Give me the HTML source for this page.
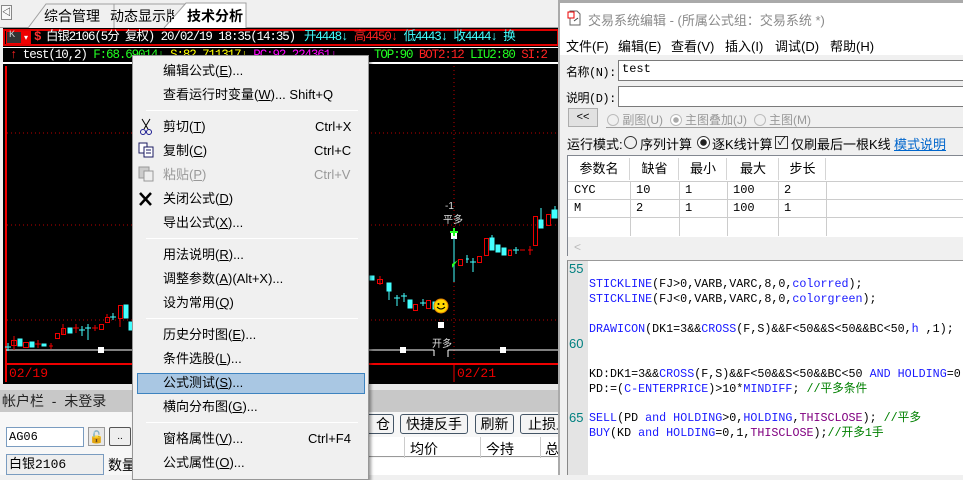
<!DOCTYPE html>
<html><head><meta charset="utf-8"><style>
*{margin:0;padding:0;box-sizing:border-box}
body{width:963px;height:475px;overflow:hidden;background:#f0f0f0;position:relative;font-family:"Liberation Sans","Noto Sans CJK SC",sans-serif;font-size:13px}
.a{position:absolute;white-space:nowrap}
.m{font-family:"Liberation Mono","Noto Sans CJK SC",monospace}
.hr{top:30px;font-size:12.5px;letter-spacing:-1.1px;line-height:15px}
.mi{position:absolute;left:163px;font-size:13px;color:#000;line-height:16px}
.sc{position:absolute;right:13px;font-size:13px;line-height:16px}
.sep{position:absolute;left:146px;width:212px;height:1px;background:#a0a0a0;border-bottom:1px solid #fff}
.code{position:absolute;left:589px;font-family:"Liberation Mono","Noto Sans CJK SC",monospace;font-size:11.7px;line-height:15px;color:#000}
.k{color:#1a1aff}.p{color:#800080}.g{color:#008000}
.ln{position:absolute;left:569px;font-family:"Liberation Sans",sans-serif;font-size:13px;color:#008080}
.hd{position:absolute;top:158px;height:22px;background:#fff;border-right:1px solid #d5d5d5;text-align:center;line-height:22px;font-size:13px}
.cell{position:absolute;font-family:"Liberation Mono",monospace;font-size:12px}
</style></head><body>
<!-- tabs -->
<div class="a" style="left:0;top:0;width:560px;height:28px;background:#f0f0f0;border-bottom:1px solid #a0a0a0"></div>
<div class="a" style="left:1px;top:5px;width:11px;height:15px;border:1px solid #888;background:#f8f8f8;font-size:9px;line-height:13px;text-align:center">◁</div>
<svg class="a" style="left:14px;top:2px" width="240" height="27">
<path d="M14 26 L32 2 L100 2 L100 26" fill="#f0f0f0" stroke="#a0a0a0"/>
<path d="M100 26 L100 2 L172 2 L172 26" fill="#f0f0f0" stroke="#a0a0a0"/>
<path d="M150 26 L172 1 L232 1 L232 26" fill="#fff" stroke="#a0a0a0"/>
</svg>
<div class="a" style="left:44px;top:6px;font-size:14px">综合管理</div>
<div class="a" style="left:110px;top:6px;font-size:14px;width:64px;overflow:hidden">动态显示牌</div>
<div class="a" style="left:187px;top:6px;font-size:14px;font-weight:bold">技术分析</div>
<!-- chart -->
<div class="a" style="left:0;top:28px;width:560px;height:358px;background:#000;border-left:3px solid #f0f0f0"></div>
<div class="a" style="left:3px;top:29px;width:556px;height:17px;border:2px solid #e00000"></div>
<div class="a" style="left:6px;top:31px;width:25px;height:13px;border:1px solid #e00;background:#333"></div>
<div class="a m" style="left:9px;top:30px;font-size:10px;color:#ccc">K</div>
<div class="a" style="left:21px;top:31px;width:10px;height:13px;background:#e00;color:#fff;font-size:8px;line-height:13px;text-align:center">▾</div>
<div class="a m hr" style="left:34px;color:#ff3030;font-weight:bold">$</div>
<div class="a m hr" style="left:46px;color:#fff">白银2106(5分 复权) 20/02/19 18:35(14:35)</div>
<div class="a m hr" style="left:304px;color:#4ff"><span>开4448↓</span><span style="color:#f22"> 高4450↓</span> 低4443↓ 收4444↓ 换</div>
<div class="a" style="left:3px;top:47px;width:556px;height:17px;border-top:1px solid #fff;border-bottom:2px solid #fff"></div>
<div class="a m hr" style="top:48px;left:10px;color:#fff"><span style="color:#f22">↑</span> test(10,2) <span style="color:#2f2">F:68.69014↓</span> <span style="color:#ff0">S:82.711317↓</span> <span style="color:#f0f">PC:92.224361↓</span></div>
<div class="a m hr" style="top:48px;left:374px;color:#2f2">TOP:90 <span style="color:#f22">BOT2:12</span> LIU2:80 <span style="color:#f22">SI:2</span></div>
<svg class="a" style="left:0;top:0" width="560" height="390">
<g stroke="#b00" stroke-dasharray="1 3">
<line x1="7" y1="133" x2="558" y2="133"/><line x1="7" y1="225" x2="558" y2="225"/><line x1="7" y1="320" x2="558" y2="320"/>
<line x1="454" y1="66" x2="454" y2="362"/></g>
<line x1="6" y1="66" x2="6" y2="382" stroke="#e00" stroke-width="2"/>
<line x1="6" y1="364" x2="558" y2="364" stroke="#e00" stroke-width="2"/>
<line x1="454" y1="364" x2="454" y2="382" stroke="#e00"/>
<line x1="6" y1="350" x2="434" y2="350" stroke="#fff"/><line x1="448" y1="350" x2="558" y2="350" stroke="#fff"/>
<line x1="434" y1="350" x2="434" y2="356" stroke="#fff"/><line x1="448" y1="350" x2="448" y2="357" stroke="#fff"/>
<g fill="#fff"><rect x="98" y="347" width="6" height="6"/><rect x="400" y="347" width="6" height="6"/><rect x="500" y="347" width="6" height="6"/><rect x="438" y="322" width="6" height="6"/><rect x="451" y="233" width="6" height="6"/></g>
<g stroke="#e00" fill="none">
<line x1="14" y1="336" x2="14" y2="350"/><rect x="11.5" y="340.5" width="5" height="5"/>
<rect x="23.5" y="342.5" width="5" height="5"/><line x1="35" y1="344" x2="41" y2="344"/><line x1="38" y1="340" x2="38" y2="348"/>
<line x1="49" y1="346" x2="53" y2="346"/><line x1="51" y1="343" x2="51" y2="349"/>
<rect x="55.5" y="333.5" width="4" height="5"/><rect x="61.5" y="328.5" width="4" height="6"/><line x1="63" y1="324" x2="63" y2="334"/>
<line x1="73" y1="328" x2="79" y2="328"/><line x1="76" y1="324" x2="76" y2="333"/><line x1="92" y1="328" x2="98" y2="328"/><line x1="95" y1="325" x2="95" y2="331"/>
<rect x="99.5" y="324.5" width="4" height="5"/><rect x="105.5" y="317.5" width="4" height="5"/><line x1="107" y1="314" x2="107" y2="318"/>
<rect x="118.5" y="305.5" width="4" height="13"/><line x1="120" y1="318" x2="120" y2="327"/>
<line x1="380" y1="276" x2="380" y2="285"/><rect x="377.5" y="279.5" width="5" height="4"/>
<rect x="413.5" y="304.5" width="4" height="6"/><rect x="426.5" y="300.5" width="4" height="8"/>
<rect x="458.5" y="259.5" width="4" height="6"/><rect x="477.5" y="256.5" width="4" height="6"/><rect x="484.5" y="238.5" width="4" height="17"/>
<line x1="508" y1="250" x2="512" y2="250"/><rect x="508.5" y="250.5" width="3" height="5"/><line x1="520" y1="250" x2="525" y2="250"/><line x1="528" y1="250" x2="533" y2="250"/><line x1="530" y1="246" x2="530" y2="255"/>
<rect x="533.5" y="216.5" width="4" height="29"/><rect x="546.5" y="214.5" width="4" height="11"/>
</g>
<g fill="#4ff" stroke="#4ff">
<line x1="5" y1="347" x2="11" y2="347"/><line x1="8" y1="343" x2="8" y2="351"/>
<rect x="18" y="339" width="4" height="7"/><rect x="30" y="342" width="4" height="5"/><rect x="42" y="344" width="4" height="2"/>
<rect x="68" y="328" width="4" height="5"/><line x1="79" y1="330" x2="85" y2="330"/><line x1="82" y1="326" x2="82" y2="336"/>
<line x1="85" y1="328" x2="91" y2="328"/><line x1="88" y1="324" x2="88" y2="340"/>
<line x1="110" y1="317" x2="116" y2="317"/><line x1="113" y1="313" x2="113" y2="320"/>
<rect x="124" y="305" width="4" height="13"/><rect x="129" y="322" width="3" height="8"/>
<rect x="370" y="276" width="4" height="4"/><rect x="387" y="283" width="4" height="8"/><line x1="389" y1="290" x2="389" y2="300"/>
<line x1="394" y1="298" x2="400" y2="298"/><line x1="397" y1="295" x2="397" y2="306"/><line x1="401" y1="296" x2="407" y2="296"/><line x1="404" y1="293" x2="404" y2="302"/>
<rect x="408" y="300" width="4" height="8"/><line x1="420" y1="303" x2="426" y2="303"/><line x1="423" y1="299" x2="423" y2="306"/><rect x="433" y="302" width="4" height="7"/>
<line x1="466" y1="259" x2="469" y2="259"/><line x1="467" y1="255" x2="467" y2="263"/><line x1="470" y1="262" x2="476" y2="262"/><line x1="473" y1="258" x2="473" y2="272"/>
<rect x="490" y="238" width="4" height="12"/><line x1="492" y1="235" x2="492" y2="238"/><rect x="496" y="245" width="4" height="7"/><rect x="502" y="248" width="4" height="7"/>
<line x1="513" y1="250" x2="519" y2="250"/><line x1="516" y1="247" x2="516" y2="254"/>
<rect x="539" y="220" width="4" height="8"/><line x1="541" y1="208" x2="541" y2="222"/><rect x="552" y="210" width="5" height="8"/><line x1="555" y1="206" x2="555" y2="210"/>
</g>
<line x1="454" y1="238" x2="454" y2="282" stroke="#4ff"/>
<line x1="454" y1="228" x2="454" y2="236" stroke="#2f2" stroke-width="2"/><line x1="450" y1="232" x2="458" y2="232" stroke="#2f2" stroke-width="2"/>
<path d="M452 264 L458 260 L452 268Z" fill="#2f2"/>
<circle cx="441" cy="306" r="7" fill="#ffd700" stroke="#e08000"/>
<circle cx="438.5" cy="304" r="1" fill="#000"/><circle cx="443.5" cy="304" r="1" fill="#000"/>
<path d="M437 307 Q441 311 445 307" stroke="#000" fill="none"/>
</svg>
<div class="a" style="left:445px;top:201px;font-size:10px;color:#ddd">-1</div>
<div class="a" style="left:443px;top:211px;font-size:10px;color:#ddd">平多</div>
<div class="a" style="left:432px;top:335px;font-size:10px;color:#ddd">开多</div>
<div class="a m" style="left:9px;top:366px;color:#e00;font-size:13px">02/19</div>
<div class="a m" style="left:457px;top:366px;color:#e00;font-size:13px">02/21</div>
<!-- bottom -->
<div class="a" style="left:0;top:384px;width:560px;height:6px;background:#e8e8e8"></div>
<div class="a" style="left:0;top:390px;width:560px;height:22px;background:#c8c8c8;font-size:14px;line-height:22px;padding-left:2px;color:#222">帐户栏 &nbsp;- &nbsp;未登录</div>
<div class="a" style="left:0;top:412px;width:560px;height:63px;background:#f7f7f7"></div>
<div class="a m" style="left:6px;top:427px;width:78px;height:20px;border:1px solid #7a9cc0;background:#fff;font-size:12px;line-height:18px;padding-left:2px">AG06</div>
<div class="a" style="left:88px;top:427px;width:17px;height:19px;border:1px solid #999;background:#e8e8e8;color:#080;font-size:12px;text-align:center;line-height:18px">🔓</div>
<div class="a" style="left:109px;top:427px;width:22px;height:19px;border:1px solid #555;border-radius:2px;background:#eee;text-align:center;font-size:10px;line-height:18px">..</div>
<div class="a m" style="left:6px;top:454px;width:98px;height:21px;border:1px solid #7a9cc0;background:#eee;font-size:13px;line-height:19px;padding-left:2px">白银2106</div>
<div class="a" style="left:108px;top:455px;font-size:14px">数量</div>
<div class="a" style="left:362px;top:414px;width:32px;height:20px;border:1px solid #456;border-radius:3px;background:#f4f4f4;text-align:right;font-size:14px;line-height:18px;padding-right:3px">仓</div>
<div class="a" style="left:400px;top:414px;width:68px;height:20px;border:1px solid #456;border-radius:3px;background:#f4f4f4;text-align:center;font-size:14px;line-height:18px">快捷反手</div>
<div class="a" style="left:475px;top:414px;width:39px;height:20px;border:1px solid #456;border-radius:3px;background:#f4f4f4;text-align:center;font-size:14px;line-height:18px">刷新</div>
<div class="a" style="left:520px;top:414px;width:45px;height:20px;border:1px solid #456;border-radius:3px;background:#f4f4f4;font-size:14px;line-height:18px;padding-left:7px;overflow:hidden">止损止</div>
<div class="a" style="left:360px;top:437px;width:200px;height:20px;background:#fff;border-bottom:1px solid #999"></div>
<div class="a" style="left:404px;top:437px;width:1px;height:38px;background:#ccc"></div>
<div class="a" style="left:480px;top:437px;width:1px;height:38px;background:#ccc"></div>
<div class="a" style="left:540px;top:437px;width:1px;height:38px;background:#ccc"></div>
<div class="a" style="left:410px;top:439px;font-size:14px">均价</div>
<div class="a" style="left:486px;top:439px;font-size:14px">今持</div>
<div class="a" style="left:545px;top:439px;font-size:14px">总</div>
<div class="a" style="left:360px;top:458px;width:200px;height:17px;background:#fff"></div>
<!-- context menu -->
<div class="a" style="left:132px;top:55px;width:237px;height:425px;background:#f0f0f0;border:1px solid #979797;box-shadow:2px 2px 3px rgba(0,0,0,.4)"></div>
<div class="a" style="left:137px;top:373px;width:228px;height:21px;background:#a9c7e3;border:1px solid #3d83c0"></div>
<div class="mi" style="top:63px">编辑公式(<u>E</u>)...</div>
<div class="mi" style="top:87px">查看运行时变量(<u>W</u>)... Shift+Q</div>
<div class="sep" style="top:110px"></div>
<div class="mi" style="top:119px">剪切(<u>T</u>)</div><div class="sc" style="left:315px;top:119px">Ctrl+X</div>
<div class="mi" style="top:143px">复制(<u>C</u>)</div><div class="sc" style="left:314px;top:143px">Ctrl+C</div>
<div class="mi" style="top:167px;color:#999">粘贴(<u>P</u>)</div><div class="sc" style="left:314px;top:167px;color:#999">Ctrl+V</div>
<div class="mi" style="top:191px">关闭公式(<u>D</u>)</div>
<div class="mi" style="top:215px">导出公式(<u>X</u>)...</div>
<div class="sep" style="top:238px"></div>
<div class="mi" style="top:247px">用法说明(<u>R</u>)...</div>
<div class="mi" style="top:271px">调整参数(<u>A</u>)(Alt+X)...</div>
<div class="mi" style="top:295px">设为常用(<u>Q</u>)</div>
<div class="sep" style="top:318px"></div>
<div class="mi" style="top:327px">历史分时图(<u>E</u>)...</div>
<div class="mi" style="top:351px">条件选股(<u>L</u>)...</div>
<div class="mi" style="top:375px">公式测试(<u>S</u>)...</div>
<div class="mi" style="top:399px">横向分布图(<u>G</u>)...</div>
<div class="sep" style="top:422px"></div>
<div class="mi" style="top:431px">窗格属性(<u>V</u>)...</div><div class="sc" style="left:308px;top:431px">Ctrl+F4</div>
<div class="mi" style="top:455px">公式属性(<u>O</u>)...</div>
<svg class="a" style="left:137px;top:117px" width="22" height="100">
<g stroke="#000" fill="none"><path d="M5 2 L11 12 M13 2 L7 12"/><circle cx="6" cy="15" r="2.5" stroke="#1a1a90"/><circle cx="12" cy="15" r="2.5" stroke="#1a1a90"/></g>
<g stroke="#1a1a60" fill="#fff"><rect x="2" y="26" width="8" height="10"/><rect x="7" y="30" width="9" height="10"/><path d="M9 33h5M9 36h5"/></g>
<g stroke="#999" fill="#ccc"><rect x="2" y="50" width="10" height="11"/><rect x="7" y="54" width="9" height="10" fill="#eee"/></g>
<path d="M3 76 L14 88 M14 76 L3 88" stroke="#000" stroke-width="2.5"/>
</svg>
<!-- editor -->
<div class="a" style="left:558px;top:0;width:405px;height:475px;background:#f0f0f0;border-left:2px solid #aaa;border-top:3px solid #aaa"></div>
<div class="a" style="left:560px;top:3px;width:403px;height:52px;background:#fff"></div>
<svg class="a" style="left:567px;top:10px" width="14" height="16"><path d="M3 1h7l3 3v11H3z" fill="#fff" stroke="#666"/><rect x="1" y="2" width="6" height="6" fill="#fff" stroke="#e00"/><path d="M7 11l4 -3" stroke="#444"/></svg>
<div class="a" style="left:588px;top:10px;color:#8a8a8a;font-size:13px">交易系统编辑 - (所属公式组：交易系统 *)</div>
<div class="a" style="left:566px;top:36px">文件(F)</div>
<div class="a" style="left:618px;top:36px">编辑(E)</div>
<div class="a" style="left:671px;top:36px">查看(V)</div>
<div class="a" style="left:725px;top:36px">插入(I)</div>
<div class="a" style="left:775px;top:36px">调试(D)</div>
<div class="a" style="left:830px;top:36px">帮助(H)</div>
<div class="a m" style="left:566px;top:63px;font-size:12px;letter-spacing:-0.5px">名称(N):</div>
<div class="a m" style="left:618px;top:60px;width:350px;height:21px;border:1px solid #7a7a7a;background:#fff;font-size:12px;padding:1px 3px">test</div>
<div class="a m" style="left:566px;top:89px;font-size:12px;letter-spacing:-0.5px">说明(D):</div>
<div class="a" style="left:618px;top:86px;width:350px;height:21px;border:1px solid #7a7a7a;background:#fff"></div>
<div class="a" style="left:568px;top:108px;width:30px;height:19px;border:1px solid #adadad;background:#e1e1e1;text-align:center;font-size:11px;line-height:17px">&lt;&lt;</div>
<div class="a" style="left:606px;top:127px;width:360px;height:1px;background:#a0a0a0"></div>
<div class="a" style="left:607px;top:111px;color:#999;font-size:12px"><span style="display:inline-block;width:12px;height:12px;border:1px solid #bbb;border-radius:50%;vertical-align:-2px"></span> 副图(U) &nbsp;<span style="display:inline-block;width:12px;height:12px;border:1px solid #bbb;border-radius:50%;vertical-align:-2px;background:radial-gradient(#aaa 2.5px,#fff 3px)"></span> 主图叠加(J) &nbsp;<span style="display:inline-block;width:12px;height:12px;border:1px solid #bbb;border-radius:50%;vertical-align:-2px"></span> 主图(M)</div>
<div class="a" style="left:567px;top:134px">运行模式:</div>
<div class="a" style="left:624px;top:136px;width:13px;height:13px;border:1px solid #333;border-radius:50%"></div>
<div class="a" style="left:640px;top:134px">序列计算</div>
<div class="a" style="left:697px;top:136px;width:13px;height:13px;border:1px solid #333;border-radius:50%;background:radial-gradient(#222 3px,#fff 3.5px)"></div>
<div class="a" style="left:712px;top:134px">逐K线计算</div>
<div class="a" style="left:775px;top:136px;width:13px;height:13px;border:1px solid #333;font-size:11px;line-height:11px;text-align:center">✓</div>
<div class="a" style="left:791px;top:134px">仅刷最后一根K线</div>
<div class="a" style="left:894px;top:134px;color:#0066cc;text-decoration:underline">模式说明</div>
<div class="a" style="left:567px;top:155px;width:400px;height:101px;border:1px solid #828790;background:#fff"></div>
<div class="hd" style="left:569px;width:61px">参数名</div><div class="hd" style="left:631px;width:48px">缺省</div><div class="hd" style="left:680px;width:47px">最小</div><div class="hd" style="left:728px;width:51px">最大</div><div class="hd" style="left:780px;width:46px">步长</div>
<svg class="a" style="left:568px;top:156px" width="395" height="100"><g stroke="#ccc"><line x1="0" y1="25.5" x2="395" y2="25.5"/><line x1="0" y1="43.5" x2="395" y2="43.5"/><line x1="0" y1="61.5" x2="395" y2="61.5"/><line x1="62.5" y1="25" x2="62.5" y2="80"/><line x1="111.5" y1="25" x2="111.5" y2="80"/><line x1="159.5" y1="25" x2="159.5" y2="80"/><line x1="210.5" y1="25" x2="210.5" y2="80"/><line x1="258.5" y1="25" x2="258.5" y2="80"/></g><rect x="0" y="81" width="395" height="19" fill="#f0f0f0"/><text x="6" y="95" fill="#bbb" font-size="12">&lt;</text></svg>
<div class="cell" style="left:574px;top:183px">CYC</div><div class="cell" style="left:636px;top:183px">10</div><div class="cell" style="left:685px;top:183px">1</div><div class="cell" style="left:733px;top:183px">100</div><div class="cell" style="left:784px;top:183px">2</div>
<div class="cell" style="left:574px;top:201px">M</div><div class="cell" style="left:636px;top:201px">2</div><div class="cell" style="left:685px;top:201px">1</div><div class="cell" style="left:733px;top:201px">100</div><div class="cell" style="left:784px;top:201px">1</div>
<div class="a" style="left:567px;top:260px;width:400px;height:215px;background:#fff;border-left:1px solid #888;border-top:1px solid #999"></div>
<div class="a" style="left:568px;top:261px;width:20px;height:214px;background:#e4e4e4"></div>
<div class="ln" style="top:261px">55</div><div class="ln" style="top:336px">60</div><div class="ln" style="top:410px">65</div>
<div class="code" style="top:277px"><span class="k">STICKLINE</span>(FJ&gt;0,VARB,VARC,8,0,<span class="k">colorred</span>);</div>
<div class="code" style="top:292px"><span class="k">STICKLINE</span>(FJ&lt;0,VARB,VARC,8,0,<span class="k">colorgreen</span>);</div>
<div class="code" style="top:322px"><span class="k">DRAWICON</span>(DK1=3&amp;&amp;<span class="k">CROSS</span>(F,S)&amp;&amp;F&lt;50&amp;&amp;S&lt;50&amp;&amp;BC&lt;50,<span class="k">h</span> ,1);</div>
<div class="code" style="top:367px">KD:DK1=3&amp;&amp;<span class="k">CROSS</span>(F,S)&amp;&amp;F&lt;50&amp;&amp;S&lt;50&amp;&amp;BC&lt;50 <span class="k">AND HOLDING</span>=0</div>
<div class="code" style="top:382px">PD:=(<span class="k">C-ENTERPRICE</span>)&gt;10*<span class="k">MINDIFF</span>;         <span class="g">//平多条件</span></div>
<div class="code" style="top:411px"><span class="k">SELL</span>(PD <span class="k">and HOLDING</span>&gt;0,<span class="k">HOLDING</span>,<span class="p">THISCLOSE</span>); <span class="g">//平多</span></div>
<div class="code" style="top:426px"><span class="k">BUY</span>(KD <span class="k">and</span>  <span class="k">HOLDING</span>=0,1,<span class="p">THISCLOSE</span>);<span class="g">//开多1手</span></div>
</body></html>
